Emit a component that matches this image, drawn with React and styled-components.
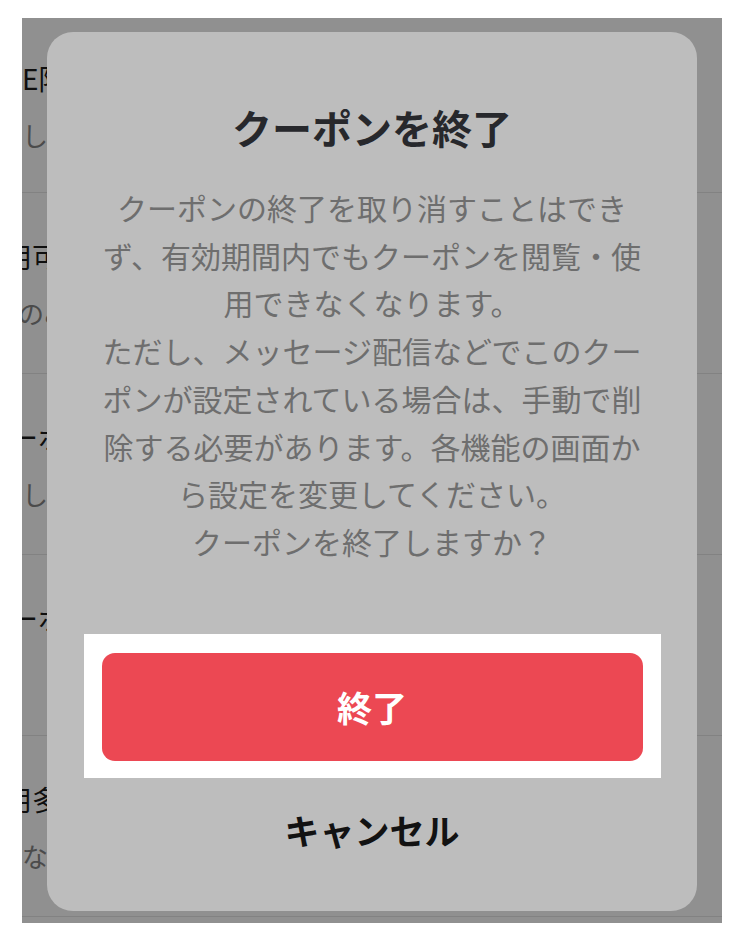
import React from 'react';
import styled, { createGlobalStyle } from 'styled-components';

const GlobalStyle = createGlobalStyle`
    html, body {
        margin: 0;
        padding: 0;
        background: #ffffff;
    }
    body {
        font-family: "Noto Sans CJK JP", "Noto Sans", sans-serif;
    }
`;

const Page = styled.div`
    padding: 18px 22px 19px;
`;
const Frame = styled.div`
    position: relative;
    width: 700px;
    height: 905px;
    overflow: hidden;
    background: #ffffff;
`;
const List = styled.div`
    display: flex;
    flex-direction: column;
`;
const Row = styled.div`
    height: ${props => props.height || 181}px;
    box-sizing: border-box;
    padding-top: ${props => props.top || 45}px;
    border-bottom: 1px solid #e6e6e6;
    display: flex;
    flex-direction: column;
    gap: 22px;
`;
const RowTitle = styled.div`
    margin-left: ${props => props.shift || 0}px;
    font-size: 28px;
    line-height: 36px;
    color: #1c1c1c;
    white-space: nowrap;
`;
const RowSub = styled.div`
    margin-left: ${props => props.shift || 0}px;
    font-size: 26px;
    line-height: 34px;
    color: #858585;
    white-space: nowrap;
`;

const Overlay = styled.div`
    position: absolute;
    inset: 0;
    background: rgba(0, 0, 0, 0.435);
    display: flex;
    flex-direction: column;
    padding: 14px 25px 12px;
    box-sizing: border-box;
`;
const Dialog = styled.div`
    flex: 1;
    background: #bdbdbd;
    border-radius: 26px;
    display: flex;
    flex-direction: column;
    align-items: center;
    padding: 67px 0 0;
`;
const Title = styled.h2`
    margin: 0;
    font-size: 40px;
    line-height: 56px;
    font-weight: 700;
    color: #27282c;
    text-align: center;
`;
const Message = styled.p`
    margin: 29px 0 0;
    width: 546px;
    font-size: 30px;
    line-height: 47.7px;
    color: #6e6e6e;
    text-align: center;
`;
const Highlight = styled.div`
    margin-top: 68px;
    width: 577px;
    box-sizing: border-box;
    padding: 19px 18px 17px;
    background: #ffffff;
`;
const EndButton = styled.button`
    width: 100%;
    height: 108px;
    border: none;
    border-radius: 13px;
    background: #ec4853;
    color: #ffffff;
    font-family: inherit;
    font-size: 35px;
    font-weight: 700;
    cursor: pointer;
`;
const CancelButton = styled.button`
    margin-top: 27px;
    border: none;
    background: none;
    padding: 0;
    font-family: inherit;
    font-size: 35px;
    line-height: 50px;
    font-weight: 700;
    color: #121212;
    cursor: pointer;
`;

const rows = [
    { title: 'E限定クーポン', sub: 'しばらくお待ちください', tShift: 0, sShift: 0, height: 175, top: 42 },
    { title: '用可能なクーポン', sub: 'のみ利用できます', tShift: -18, sShift: -4 },
    { title: 'クーポン', sub: 'しばらくお待ちください', tShift: -40, sShift: 0 },
    { title: 'クーポン', sub: '', tShift: -40, sShift: 0 },
    { title: '利用多数', sub: 'なし', tShift: -46, sShift: 0 },
];

const App = () =>
    <Page>
        <GlobalStyle />
        <Frame>
            <List>
                {rows.map((row, i) =>
                    <Row key={i} height={row.height} top={row.top}>
                        <RowTitle shift={row.tShift}>{row.title}</RowTitle>
                        <RowSub shift={row.sShift}>{row.sub}</RowSub>
                    </Row>
                )}
            </List>
            <Overlay>
                <Dialog>
                    <Title>クーポンを終了</Title>
                    <Message>
                        クーポンの終了を取り消すことはできず、有効期間内でもクーポンを閲覧・使用できなくなります。<br />
                        ただし、メッセージ配信などでこのクーポンが設定されている場合は、手動で削除する必要があります。各機能の画面から設定を変更してください。<br />
                        クーポンを終了しますか？
                    </Message>
                    <Highlight>
                        <EndButton>終了</EndButton>
                    </Highlight>
                    <CancelButton>キャンセル</CancelButton>
                </Dialog>
            </Overlay>
        </Frame>
    </Page>

export default App;
